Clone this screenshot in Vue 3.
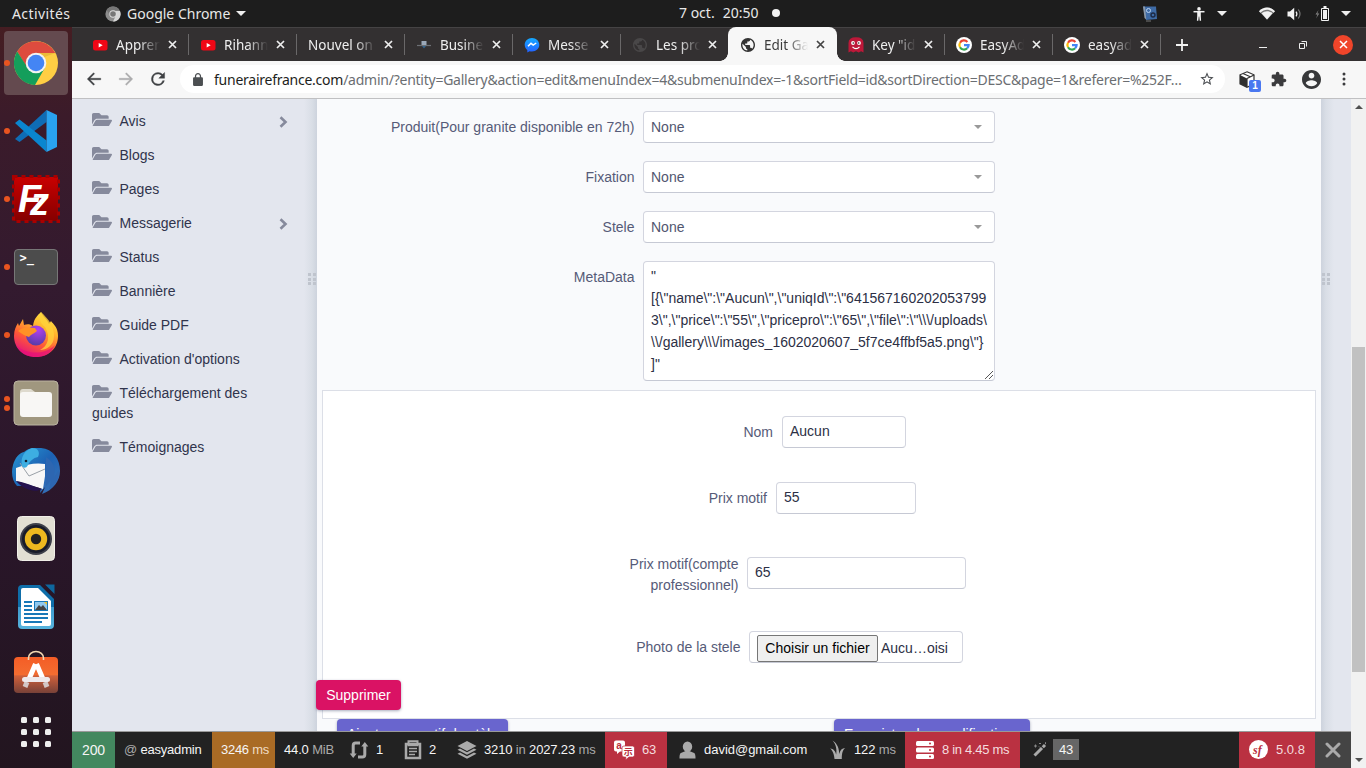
<script setup>
const tabs = [
  { icon: 'youtube', title: 'Appren', sep: true },
  { icon: 'youtube', title: 'Rihann', sep: true },
  { icon: '', title: 'Nouvel on', sep: true },
  { icon: 'business', title: 'Busine', sep: true },
  { icon: 'messenger', title: 'Messe', sep: true },
  { icon: 'globe', title: 'Les pro' },
  { icon: 'globe', title: 'Edit Ga', active: true },
  { icon: 'ghost', title: 'Key "id', sep: true },
  { icon: 'google', title: 'EasyAd', sep: true },
  { icon: 'google', title: 'easyad', sep: true },
]

const menu = [
  { label: 'Avis', sub: true },
  { label: 'Blogs' },
  { label: 'Pages' },
  { label: 'Messagerie', sub: true },
  { label: 'Status' },
  { label: 'Bannière' },
  { label: 'Guide PDF' },
  { label: "Activation d'options" },
  { label: 'Téléchargement des guides' },
  { label: 'Témoignages' },
]

const selects = ['Produit(Pour granite disponible en 72h)', 'Fixation', 'Stele']

const metadata = [
  '"',
  '[{\\"name\\":\\"Aucun\\",\\"uniqId\\":\\"641567160202053799',
  '3\\",\\"price\\":\\"55\\",\\"pricepro\\":\\"65\\",\\"file\\":\\"\\\\\\/uploads\\',
  '\\\\/gallery\\\\\\/images_1602020607_5f7ce4ffbf5a5.png\\"}',
  ']"',
].join('\n')

const globePath =
  'M12 2C6.48 2 2 6.48 2 12s4.48 10 10 10 10-4.48 10-10S17.52 2 12 2zm-1 17.93c-3.95-.49-7-3.85-7-7.93 0-.62.08-1.21.21-1.79L9 15v1c0 1.1.9 2 2 2v1.93zm6.9-2.54c-.26-.81-1-1.39-1.9-1.39h-1v-3c0-.55-.45-1-1-1H8v-2h2c.55 0 1-.45 1-1V7h2c1.1 0 2-.9 2-2v-.41c2.93 1.19 5 4.06 5 7.41 0 2.08-.8 3.97-2.1 5.39z'
</script>

<template>
  <div class="screen">
    <header class="topbar">
      <span class="activities">Activités</span>
      <svg class="mini-chrome" width="16" height="16" viewBox="0 0 16 16">
        <circle cx="8" cy="8" r="7.6" fill="#8d8d8d" />
        <path d="M8 .4A7.6 7.6 0 0 0 1.5 4L5 9.5 8 4.6h6.8A7.6 7.6 0 0 0 8 .4z" fill="#777" />
        <path d="M15 5a7.6 7.6 0 0 1-7 10.6L11 9.6V5z" fill="#d6d6d6" />
        <circle cx="8" cy="8" r="3.7" fill="#ddd" />
        <circle cx="8" cy="8" r="2.8" fill="#777" />
      </svg>
      <span class="appname">Google Chrome</span>
      <i class="caret caret-app"></i>
      <span class="clock"><span>7 oct.</span><span>20:50</span><i></i></span>
      <div class="tray">
        <svg width="16" height="16" viewBox="0 0 16 16">
          <path d="M1 .5h13l1 12.500-11 1z" fill="#3e6ba6" />
          <path d="M1 .5h2l1.300 13L2.500 12z" fill="#8a98a8" />
          <circle cx="6.500" cy="4.500" r="2" fill="none" stroke="#bcd3ef" />
          <circle cx="11" cy="9" r="2" fill="none" stroke="#1d2b45" stroke-width="1.400" />
          <path d="M4 15h5" stroke="#777" />
        </svg>
        <svg class="t-access" width="12" height="14" viewBox="0 0 12 14">
          <circle cx="6" cy="1.900" r="1.800" fill="#f2f2f2" />
          <path d="M.5 4.700h11" stroke="#f2f2f2" stroke-width="1.500" />
          <path d="M4.200 4.500h3.600V9l.3 4.800H6.700L6.200 9.500h-.4L5.300 13.800H3.900L4.200 9z" fill="#f2f2f2" />
        </svg>
        <i class="caret t-c1"></i>
        <svg class="t-wifi" width="16" height="13" viewBox="0 0 16 13">
          <path d="M0 4.300C4.500-.7 11.500-.7 16 4.300L8 12.800z" fill="#777" />
          <path d="M0 4.300C4.500-.7 11.500-.7 16 4.300L14.600 5.700C10.500 1.700 5.500 1.700 1.400 5.700z" fill="#f2f2f2" />
          <path d="M2.500 6.300c3.300-2.700 7.700-2.700 11 0L8 12.500z" fill="#f2f2f2" />
        </svg>
        <svg class="t-vol" width="15" height="14" viewBox="0 0 15 14">
          <path d="M.5 4.500H3L7.200.8v12.400L3 9.500H.5z" fill="#f2f2f2" />
          <path d="M9 4.700q1.800 2.300 0 4.600" fill="none" stroke="#f2f2f2" stroke-width="1.200" />
          <path d="M11.300 2.500q3.400 4.500 0 9" fill="none" stroke="#777" stroke-width="1.200" />
        </svg>
        <svg class="t-bat" width="15" height="16" viewBox="0 0 15 16">
          <path d="M3.500 4L.5 8.500h2L1 12.500 4.300 7.500h-2z" fill="#888" />
          <path d="M6.500 2.500h7v12h-7z" fill="none" stroke="#f2f2f2" />
          <path d="M8 4h4v9H8zM8.500 0h3v2h-3z" fill="#f2f2f2" />
        </svg>
        <i class="caret t-c2"></i>
      </div>
    </header>

    <div class="body">
      <nav class="dock">
        <div class="slot on">
          <i class="run"></i>
          <svg width="46" height="46" viewBox="0 0 46 46">
            <circle cx="23" cy="23" r="22" fill="#ffce44" />
            <path d="M4.200 11.500A22 22 0 0 1 42.300 13H23L14 28z" fill="#dd4b3e" />
            <path d="M4.200 11.500A22 22 0 0 0 22 45L31.500 28.500H15z" fill="#149e5b" />
            <path d="M23 13h19.300l-11 4z" fill="#d9a72a" opacity=".5" />
            <circle cx="23" cy="23" r="10.300" fill="#f3f3f3" />
            <circle cx="23" cy="23" r="8.300" fill="#4485f4" />
          </svg>
        </div>
        <div class="slot">
          <i class="run"></i>
          <svg width="44" height="44" viewBox="0 0 44 44">
            <path d="M1 30L32.500 1v12L5.500 33z" fill="#0f6cb5" />
            <path d="M1 14l4.500-3.500 27 21V43z" fill="#0a86cf" />
            <path d="M32.500 1L43 6v32l-10.500 5z" fill="#29a3f0" />
          </svg>
        </div>
        <div class="slot">
          <i class="run"></i>
          <svg width="48" height="48" viewBox="0 0 48 48">
            <defs><linearGradient id="fz" x1="0" y1="0" x2="0" y2="1"><stop offset="0" stop-color="#c90000" /><stop offset="1" stop-color="#850000" /></linearGradient></defs>
            <rect x="2" y="2" width="44" height="44" fill="url(#fz)" />
            <rect x="1.500" y="1.500" width="45" height="45" fill="none" stroke="#a90000" stroke-width="3" stroke-dasharray="4 4" />
            <text class="fz"><tspan x="6" y="37">F</tspan><tspan x="18" y="40">z</tspan></text>
          </svg>
        </div>
        <div class="slot">
          <i class="run"></i>
          <svg width="44" height="36" viewBox="0 0 44 36">
            <rect x=".5" y=".5" width="43" height="35" rx="3.500" fill="#4c4c4c" stroke="#777" />
            <text x="5.500" y="13" class="prompt">&gt;_</text>
          </svg>
        </div>
        <div class="slot">
          <i class="run"></i>
          <svg width="46" height="48" viewBox="0 0 46 48">
            <defs>
              <linearGradient id="ff" x1=".8" y1="0" x2=".3" y2="1"><stop offset="0" stop-color="#fff04a" /><stop offset=".35" stop-color="#ffb32c" /><stop offset=".65" stop-color="#ff5a36" /><stop offset="1" stop-color="#e3127c" /></linearGradient>
              <radialGradient id="fp" cx=".6" cy=".2" r=".9"><stop offset="0" stop-color="#b33ff0" /><stop offset="1" stop-color="#4d3b9f" /></radialGradient>
            </defs>
            <path d="M23 46C10 46 1 37 1 25c0-6 2-10 4-13l1 3 4-7 1 6c3-1 6-1 9 1 1-8 5-11 8-14 2 5 6 7 8 12l2-3c2 3 7 6 7 15 0 12-9 21-22 21z" fill="url(#ff)" />
            <circle cx="23" cy="24.500" r="10" fill="url(#fp)" />
            <path d="M5 20c4-4 10-4 17-3l2 3c-3 3-6 3-8 6-4-1-7-3-11-6z" fill="#ff9125" />
            <path d="M28 1c7 7 13 13 13 24 0 10-8 14-14 14 8-4 11-13 5-23-6-5-6-10-4-15z" fill="#ffd13b" opacity=".8" />
            <path d="M3 34c7 8 27 12 39 0-4 9-11 12-19 12S7 43 3 34z" fill="#e5107b" opacity=".7" />
          </svg>
        </div>
        <div class="slot">
          <i class="run two"></i>
          <svg width="46" height="46" viewBox="0 0 46 46">
            <rect x="1" y="1" width="44" height="44" rx="4" fill="#a0977f" stroke="#bbb4a2" />
            <path d="M7 12q0-3 3-3h8l4 3v6H7z" fill="#dedace" />
            <rect x="7" y="12" width="32" height="25" rx="3" fill="#f8f7f5" />
          </svg>
        </div>
        <div class="slot">
          <svg width="48" height="48" viewBox="0 0 48 48">
            <defs><linearGradient id="tb" x1="0" y1="0" x2="1" y2="1"><stop offset="0" stop-color="#279bd5" /><stop offset=".5" stop-color="#1d62b4" /><stop offset="1" stop-color="#3d74b8" /></linearGradient></defs>
            <path d="M12 5c5-5 12-4 17-4 12 1 19 11 19 23 0 10-7 19-18 23l3-7-5 6 1-7H5C0 34-1 25 1 18 3 11 7 6 12 5z" fill="url(#tb)" />
            <path d="M4 21q16-6 29-4v12l-2 13L4 34z" fill="#f7f7f7" />
            <path d="M8 16l9 13 16-7" fill="none" stroke="#9aa1a8" />
            <path d="M4 34c8 1 17 5 26 8-7 4-18 1-26-8z" fill="#25124f" />
            <path d="M10 19C8 10 13 3 20 1c7 0 8 5 6 9-5 1-8 4-10 8-2 4-5 3-6 1z" fill="#3daee2" />
            <path d="M34 10c8 5 10 12 8 20l5-7c0 12-5 16-10 20l2-10-5 6z" fill="#2d66b1" />
            <circle cx="14" cy="14" r="1.300" fill="#123" />
          </svg>
        </div>
        <div class="slot">
          <svg width="38" height="46" viewBox="0 0 38 46">
            <rect x=".5" y=".5" width="37" height="44" rx="4" fill="#e2dfd3" stroke="#f1efe8" />
            <circle cx="19" cy="23" r="16" fill="#3d3f49" />
            <circle cx="19" cy="23" r="14" fill="#191c2a" />
            <circle cx="19" cy="23" r="11.200" fill="#edb91f" />
            <circle cx="19" cy="23" r="5.200" fill="#222" />
          </svg>
        </div>
        <div class="slot">
          <svg width="38" height="46" viewBox="0 0 38 46">
            <defs><linearGradient id="lw" x1="0" y1="0" x2="0" y2="1"><stop offset=".49" stop-color="#0f6ea9" /><stop offset=".5" stop-color="#3f9bce" /><stop offset="1" stop-color="#56b3dd" /></linearGradient></defs>
            <path d="M5 1h18l14 14v26q0 4-4 4H5q-4 0-4-4V5q0-4 4-4z" fill="url(#lw)" />
            <path d="M6 4h15l13 13v23q0 2-2 2H6q-2 0-2-2V6q0-2 2-2z" fill="#fff" />
            <path d="M28 .5h9.500V10z" fill="#0e679e" />
            <path d="M7 18h8M7 22h8M7 26h8M7 30h24M7 34h24M7 38h18" stroke="#1878b8" stroke-width="2" />
            <rect x="17.500" y="17.500" width="13" height="9" fill="#91c9ef" stroke="#1878b8" />
            <path d="M18 26l4-5 2 2 2-2 4 5z" fill="#454545" />
            <path d="M27 18h3v3z" fill="#f0c32c" />
          </svg>
        </div>
        <div class="slot">
          <svg class="soft" width="46" height="44" viewBox="0 0 46 44">
            <defs><linearGradient id="sw" x1="0" y1="0" x2="0" y2="1"><stop offset="0" stop-color="#f45d26" /><stop offset=".5" stop-color="#f36d31" /><stop offset=".52" stop-color="#d0603a" /><stop offset="1" stop-color="#774138" /></linearGradient></defs>
            <rect x="1" y="7" width="44" height="36" rx="4" fill="url(#sw)" />
            <path d="M15.500 10V8a7.500 6.500 0 0 1 15 0v2" fill="none" stroke="#f2d8b2" stroke-width="1.600" />
            <path d="M22.500 14l-6.500 15M23.500 14l6.500 15" stroke="#fff" stroke-width="5" />
            <path d="M14 32l-2 5M32 32l2 5" stroke="#d4c8c7" stroke-width="5" />
            <rect x="9" y="27" width="28" height="5" rx="2.500" fill="#eee9eb" />
          </svg>
        </div>
        <div class="apps"><i v-for="n in 9" :key="n"></i></div>
      </nav>

      <div class="browser">
        <div class="tabstrip">
          <div v-for="(t, i) in tabs" :key="i" class="tab" :class="{ active: t.active, sep: t.sep }">
            <svg v-if="t.icon === 'youtube'" class="fav" viewBox="0 0 16 16">
              <rect x="1" y="3" width="14.500" height="10.500" rx="2.500" fill="#f00716" />
              <path d="M6.700 6v4.500l4-2.200z" fill="#fff" />
            </svg>
            <svg v-else-if="t.icon === 'business'" class="fav" viewBox="0 0 16 16">
              <path d="M1 8.500h14" stroke="#6d7075" stroke-width="1.200" />
              <path d="M5.500 4h5v4h-5z" fill="#9ba8b8" />
              <path d="M6 9h4l-2 2.500z" fill="#33658f" />
            </svg>
            <svg v-else-if="t.icon === 'messenger'" class="fav" viewBox="0 0 16 16">
              <defs><linearGradient id="ms" x1="0" y1="0" x2="0" y2="1"><stop offset="0" stop-color="#15aaff" /><stop offset="1" stop-color="#2360ff" /></linearGradient></defs>
              <path d="M8 1C3.800 1 .7 4 .7 7.800c0 2.200 1 4 2.600 5.200v2.400l2.300-1.200c.7.200 1.500.3 2.400.3 4.200 0 7.300-2.900 7.300-6.700S12.200 1 8 1z" fill="url(#ms)" />
              <path d="M4 9.300l3-3 2.200 1.800L12.200 6" fill="none" stroke="#fff" stroke-width="1.500" />
            </svg>
            <svg v-else-if="t.icon === 'globe'" class="fav globe" viewBox="2 2 20 20"><path :d="globePath" /></svg>
            <svg v-else-if="t.icon === 'ghost'" class="fav" viewBox="0 0 16 16">
              <path d="M.5 15.500V6Q.5.300 8 .3T15.500 6v9.500l-2.400-1.200-2.400 1.200L8 14.300l-2.700 1.200-2.400-1.200z" fill="#bd1839" />
              <circle cx="5" cy="6" r="1.900" fill="#fff" /><circle cx="11" cy="6" r="1.900" fill="#fff" />
              <circle cx="5.300" cy="6" r=".8" fill="#222" /><circle cx="10.700" cy="6" r=".8" fill="#222" />
              <path d="M4.500 9.800q3.500 3.600 7 0" fill="none" stroke="#fff" stroke-width="1.200" />
            </svg>
            <svg v-else-if="t.icon === 'google'" class="fav" viewBox="0 0 16 16">
              <circle cx="8" cy="8" r="8" fill="#fff" />
              <g fill="none" stroke-width="2.200">
                <path d="M11.400 4.900A4.600 4.600 0 0 0 4 5.700" stroke="#ea4335" />
                <path d="M4 5.700a4.600 4.600 0 0 0 0 4.600" stroke="#fbbc05" />
                <path d="M4 10.300a4.600 4.600 0 0 0 7.200.9" stroke="#34a853" />
                <path d="M11.200 11.200A4.600 4.600 0 0 0 12.600 8.100H8" stroke="#4285f4" />
              </g>
            </svg>
            <span class="title">{{ t.title }}</span>
            <svg class="x" width="9" height="9" viewBox="0 0 9 9"><path d="M1 1l7 7M8 1L1 8" /></svg>
          </div>
          <svg class="plus" width="12" height="12" viewBox="0 0 12 12"><path d="M6 0v12M0 6h12" stroke="#f2f2f2" stroke-width="1.800" /></svg>
          <div class="winbtns">
            <i class="min"></i>
            <svg width="8" height="8" viewBox="0 0 8 8"><path d="M.5 2.500h5v5h-5zM2.500.5h5v5" fill="none" stroke="#eee" /></svg>
            <b><svg width="9" height="9" viewBox="0 0 9 9"><path d="M1 1l7 7M8 1L1 8" stroke="#fff" stroke-width="1.500" /></svg></b>
          </div>
        </div>

        <div class="toolbar">
          <svg class="nav" viewBox="0 0 24 24"><path d="M21 11H6.800l6-6L11.400 3.600 3 12l8.400 8.400 1.400-1.400-6-6H21z" fill="#3e4043" stroke="#3e4043" stroke-width=".5" /></svg>
          <svg class="nav" viewBox="0 0 24 24"><path d="M3 11h14.200l-6-6 1.400-1.400L21 12l-8.400 8.400-1.400-1.400 6-6H3z" fill="#ababad" stroke="#ababad" stroke-width=".5" /></svg>
          <svg class="nav" viewBox="0 0 24 24"><path d="M18.200 5.800A8.700 8.700 0 0 0 12 3.200a8.800 8.800 0 1 0 8.500 11h-2.300A6.600 6.600 0 1 1 12 5.400c1.800 0 3.500.8 4.600 2L13 11h7.800V3.200z" fill="#3e4043" stroke="#3e4043" stroke-width=".5" /></svg>
          <div class="omnibox">
            <svg class="lock" width="10" height="13" viewBox="4 1 16 21"><path d="M18 8h-1V6c0-2.760-2.240-5-5-5S7 3.240 7 6v2H6c-1.100 0-2 .9-2 2v10c0 1.100.9 2 2 2h12c1.100 0 2-.9 2-2V10c0-1.100-.9-2-2-2zM9 6a3 3 0 0 1 6 0v2H9z" fill="#4c4f52" /></svg>
            <span class="url"><b>funerairefrance.com</b>/admin/?entity=Gallery&amp;action=edit&amp;menuIndex=4&amp;submenuIndex=-1&amp;sortField=id&amp;sortDirection=DESC&amp;page=1&amp;referer=%252F…</span>
            <svg class="star" width="16" height="16" viewBox="0 0 24 24"><path d="M22 9.240l-7.190-.62L12 2 9.190 8.630 2 9.240l5.460 4.730L5.820 21 12 17.270 18.180 21l-1.630-7.030L22 9.240zM12 15.400l-3.760 2.270 1-4.280-3.320-2.880 4.380-.38L12 6.100l1.710 4.040 4.380.38-3.320 2.880 1 4.280L12 15.400z" fill="#4a4d51" /></svg>
          </div>
          <div class="cube">
            <svg width="16" height="17" viewBox="0 0 16 17">
              <path d="M8 .8l7 3v9l-7 3.500-7-3.500v-9z" fill="#fff" stroke="#333" stroke-width="1.200" />
              <path d="M1 4l7 3.500v8.800l-7-3.500z" fill="#2f2f2f" />
              <path d="M8 7.500L15 4M8 7.500V16M4 2.500l7.300 3.300" stroke="#333" stroke-width="1.200" />
            </svg>
            <b>1</b>
          </div>
          <svg class="puzzle" viewBox="1 0 23 23"><path d="M20.500 11H19V7c0-1.100-.9-2-2-2h-4V3.500C13 2.120 11.880 1 10.500 1S8 2.120 8 3.500V5H4c-1.100 0-1.990.9-1.990 2v3.800H3.500c1.490 0 2.700 1.210 2.700 2.700s-1.210 2.700-2.700 2.700H2V20c0 1.100.9 2 2 2h3.800v-1.500c0-1.490 1.210-2.700 2.700-2.700s2.700 1.210 2.700 2.700V22H17c1.100 0 2-.9 2-2v-4h1.500c1.380 0 2.500-1.120 2.500-2.500S21.880 11 20.500 11z" fill="#3b3b3d" /></svg>
          <svg class="account" viewBox="2 2 20 20"><path d="M12 2C6.480 2 2 6.480 2 12s4.480 10 10 10 10-4.480 10-10S17.520 2 12 2zm0 3c1.660 0 3 1.340 3 3s-1.340 3-3 3-3-1.340-3-3 1.340-3 3-3zm0 14.200c-2.500 0-4.710-1.280-6-3.220.03-1.990 4-3.080 6-3.080 1.990 0 5.970 1.090 6 3.080-1.290 1.940-3.500 3.220-6 3.220z" fill="#37383a" /></svg>
          <svg class="dots" width="4" height="14" viewBox="0 0 4 14"><circle cx="2" cy="2" r="1.500" /><circle cx="2" cy="7" r="1.500" /><circle cx="2" cy="12" r="1.500" /></svg>
        </div>

        <div class="viewport">
          <div class="page">
            <div class="columns">
              <aside class="sidebar">
                <a v-for="m in menu" :key="m.label">
                  <svg class="folder" viewBox="0 64 576 384"><path d="M572.694 292.093L500.270 416.248A63.997 63.997 0 0 1 444.989 448H45.025c-18.523 0-30.064-20.093-20.731-36.093l72.424-124.155A64 64 0 0 1 152 256h399.964c18.523 0 30.064 20.093 20.730 36.093zM152 224h328v-48c0-26.510-21.490-48-48-48H272l-64-64H48C21.490 64 0 85.490 0 112v278.046l69.077-118.418C86.214 242.250 117.989 224 152 224z" /></svg>{{ m.label }}
                  <svg v-if="m.sub" class="chev" width="9" height="12" viewBox="0 0 9 12"><path d="M1.500 1.300L6.500 6l-5 4.700" /></svg>
                </a>
                <span class="grip"><i v-for="n in 6" :key="n"></i></span>
              </aside>

              <main class="content">
                <div v-for="s in selects" :key="s" class="row">
                  <label>{{ s }}</label>
                  <div class="control select">None<i></i></div>
                </div>
                <div class="row area">
                  <label>MetaData</label>
                  <div class="control textarea">{{ metadata }}<svg width="8" height="8" viewBox="0 0 8 8"><path d="M0 8L8 0M4 8l4-4" /></svg></div>
                </div>

                <section class="panel">
                  <div class="prow r1"><label>Nom</label><div class="control">Aucun</div></div>
                  <div class="prow r2"><label>Prix motif</label><div class="control">55</div></div>
                  <div class="prow r3"><label>Prix motif(compte<br>professionnel)</label><div class="control">65</div></div>
                  <div class="prow r4"><label>Photo de la stele</label><div class="control file"><span class="choose">Choisir un fichier</span>Aucu…oisi</div></div>
                  <span class="btn danger">Supprimer</span>
                </section>
                <div class="actions">
                  <span class="btn primary add">Ajouter un motif de stèle</span>
                  <span class="btn primary save">Enregistrer les modifications</span>
                </div>
              </main>

              <div class="gutter"><span class="grip"><i v-for="n in 6" :key="n"></i></span></div>
            </div>

            <footer class="wdt">
              <div class="b status">200</div>
              <div class="b route"><em>@</em> easyadmin</div>
              <div class="b time">3246 <em>ms</em></div>
              <div class="b mem">44.0 <em>MiB</em></div>
              <div class="b ajax">
                <svg width="20" height="20" viewBox="0 0 20 20"><path d="M4.200 14V5.500q0-2.500 2.500-2.500H11M15.800 6v8.500q0 2.500-2.500 2.500H9" fill="none" stroke="#aaa" stroke-width="3" /><path d="M.7 13.500h7L4.200 18zM12.300 6.500h7L15.800 2z" fill="#aaa" /></svg>1
              </div>
              <div class="b form">
                <svg width="18" height="20" viewBox="0 0 18 20"><path d="M2 4h14v14H2z" fill="none" stroke="#aaa" stroke-width="2.500" /><path d="M4.500 1.300h9v4h-9z" fill="none" stroke="#aaa" stroke-width="2" /><path d="M5 8.500h8M5 11.500h8M5 14.500h6" stroke="#aaa" stroke-width="1.600" /></svg>2
              </div>
              <div class="b cache">
                <svg width="20" height="20" viewBox="0 0 20 20"><path d="M10 1l9.500 5L10 11 .5 6zM.5 9.800L3 8.500l7 3.700 7-3.700 2.500 1.300L10 14.800zM.5 13.800L3 12.500l7 3.700 7-3.700 2.500 1.300L10 18.800z" fill="#aaa" /></svg>3210 <em>in</em> 2027.23 <em>ms</em>
              </div>
              <div class="b red trans">
                <svg width="21" height="20" viewBox="0 0 21 20">
                  <path d="M2 .5h7q2 0 2 2v7q0 2-2 2H6L3 14v-2.500H2q-2 0-2-2v-7q0-2 2-2z" fill="#fff" />
                  <path d="M10 6h8.500q2 0 2 2v7q0 2-2 2H15l-3.200 2.800V17H10q-2 0-2-2V8q0-2 2-2z" fill="#fff" stroke="#ba3040" stroke-width=".7" />
                  <text x="2.200" y="8.500" class="tr-a">a</text><text x="9.700" y="15" class="tr-b">示</text>
                </svg>63
              </div>
              <div class="b user">
                <svg width="17" height="18" viewBox="0 0 18 18"><ellipse cx="9" cy="5.500" rx="5" ry="5.500" fill="#aaa" /><path d="M7 10h4l5 2.300q1.500.8 1.500 5.700H.5q0-4.900 1.500-5.700z" fill="#aaa" /></svg>david@gmail.com
              </div>
              <div class="b twig">
                <svg width="16" height="20" viewBox="0 0 16 20"><path d="M4.500 19c-.3-4-1.500-8.500-4.500-10.500 3.500 0 5.500 3 6.200 6C7 9 6 4.500 2.500.5 7.500 3.500 9 8.500 9.300 14c.7-4 2.700-6 6-6-2.800 1.700-3.500 6-3.500 11z" fill="#aaa" /></svg>122 <em>ms</em>
              </div>
              <div class="b red db">
                <svg width="18" height="18" viewBox="0 0 18 18"><rect width="18" height="5" x="0" y="0" rx="1.500" fill="#fff" /><rect width="18" height="5" x="0" y="6.500" rx="1.500" fill="#fff" /><rect width="18" height="5" x="0" y="13" rx="1.500" fill="#fff" /><g fill="#ba3040"><circle cx="14" cy="2.500" r="1" /><circle cx="14" cy="9" r="1" /><circle cx="14" cy="15.500" r="1" /></g></svg>8 <em>in</em> 4.45 <em>ms</em>
              </div>
              <div class="b deco">
                <svg width="14" height="15" viewBox="0 0 14 15"><path d="M1.500 13.500L9 6" stroke="#aaa" stroke-width="3" /><path d="M9.800 5.200L12 3" stroke="#aaa" stroke-width="3" /><path d="M1 4h3M2.500 2.500v3M6 1.500h2M12.500.2v2M6 4.500l1 1" stroke="#888" /></svg><span>43</span>
              </div>
              <div class="fill"></div>
              <div class="b red sf">
                <svg width="19" height="19" viewBox="0 0 19 19"><circle cx="9.500" cy="9.500" r="9.500" fill="#fff" /><text x="4" y="13.500" class="sf-t">sf</text></svg>5.0.8
              </div>
              <div class="b close"><svg width="16" height="16" viewBox="0 0 16 16"><path d="M2 2l12 12M14 2L2 14" stroke="#aaa" stroke-width="3" stroke-linecap="round" /></svg></div>
            </footer>
          </div>

          <div class="scroll">
            <i class="up"></i>
            <div class="track"><div class="thumb"></div></div>
            <i class="down"></i>
          </div>
        </div>
      </div>
    </div>
  </div>
</template>

<style>
body { margin: 0; overflow: hidden; }
</style>

<style scoped>
* { box-sizing: border-box; }
svg { display: block; flex: none; }
.screen { width: 1366px; height: 768px; display: flex; flex-direction: column; overflow: hidden; font-family: "Liberation Sans", Arial, sans-serif; font-size: 14px; }

.topbar { height: 27px; flex: none; background: #1d1d1d; color: #e8e8e8; display: flex; align-items: center; position: relative; font-family: "Noto Sans", sans-serif; font-size: 14px; white-space: nowrap; }
.activities { width: 58px; margin-left: 12px; letter-spacing: .4px; }
.mini-chrome { margin-left: 35px; }
.appname { width: 104px; margin-left: 6px; }
.caret { border: 5px solid transparent; border-top-color: #eee; border-bottom: 0; }
.caret-app { margin-left: 5px; }
.clock { position: absolute; left: 679px; top: 3px; display: flex; align-items: center; gap: 8px; }
.clock i { width: 8px; height: 8px; border-radius: 50%; background: #f2f2f2; margin-left: 6px; }
.tray { display: flex; align-items: center; margin-left: auto; padding-right: 15px; }
.t-access { margin-left: 35px; }
.t-c1 { margin-left: 12px; }
.t-wifi { margin-left: 32px; }
.t-vol { margin-left: 12px; }
.t-bat { margin-left: 13px; }
.t-c2 { margin-left: 11px; }

.body { flex: 1; display: flex; min-height: 0; }
.dock { width: 72px; flex: none; background: linear-gradient(#451d22, #3b1b2a 12%, #331a2f 35%, #2a162a 65%, #22151f); padding-top: 2px; display: flex; flex-direction: column; }
.slot { height: 68px; flex: none; display: flex; align-items: center; justify-content: center; position: relative; }
.slot.on { height: 64px; margin: 2px 4px; border-radius: 4px; background: #644a4f; }
.run { position: absolute; left: 4px; width: 6px; height: 6px; border-radius: 50%; background: #e95420; }
.on .run { left: 0; }
.run.two { transform: translateY(-4px); box-shadow: 0 9px #e95420; }
.soft { margin-top: -6px; }
.fz { font: italic bold 38px "Liberation Sans", sans-serif; fill: #fff; }
.prompt { font: bold 12px "DejaVu Sans Mono", monospace; fill: #fff; }
.apps { display: grid; grid-template-columns: repeat(3, 6px); gap: 6px; justify-content: center; margin-top: 8px; }
.apps i { height: 6px; border-radius: 1.500px; background: #eee; }

.browser { flex: 1; min-width: 0; display: flex; flex-direction: column; }
.tabstrip { height: 34px; flex: none; background: #333031; border-top: 1px solid #454344; display: flex; align-items: center; padding-left: 8px; font-family: "Noto Sans", sans-serif; font-size: 13.500px; color: #eee; position: relative; }
.tab { width: 108px; height: 33px; flex: none; padding-left: 12px; display: flex; align-items: center; position: relative; }
.tab.sep::after { content: ""; position: absolute; right: -1px; top: 6px; width: 1px; height: 21px; background: #6a6869; }
.tab.active { background: #f7f7f7; color: #3b3b3b; border-radius: 8px 8px 0 0; height: 34px; margin-top: -1px; padding-top: 1px; width: 109px; margin-right: -1px; padding-right: 1px; }
.tab.active::before, .tab.active::after { content: ""; position: absolute; bottom: 0; width: 8px; height: 8px; }
.tab.active::before { left: -8px; background: radial-gradient(circle at 0 0, transparent 7.500px, #f7f7f7 8px); }
.tab.active::after { right: -8px; background: radial-gradient(circle at 100% 0, transparent 7.500px, #f7f7f7 8px); }
.fav { width: 16px; height: 16px; margin-right: 8px; }
.globe { width: 14px; height: 14px; margin: 0 9px 0 1px; fill: #494748; }
.active .globe { fill: #333; }
.title { flex: 1; overflow: hidden; white-space: nowrap; -webkit-mask-image: linear-gradient(90deg, #000 calc(100% - 21px), transparent); mask-image: linear-gradient(90deg, #000 calc(100% - 21px), transparent); }
.x { margin: 0 11px 0 8px; fill: none; stroke: #eee; stroke-width: 1.700; }
.active .x { stroke: #444; }
.plus { margin-left: 16px; }
.winbtns { margin-left: auto; display: flex; align-items: center; padding-right: 13px; }
.min { width: 8px; height: 1px; background: #eee; margin: 6px 32px 0 0; }
.winbtns b { width: 20px; height: 20px; margin-left: 26px; border-radius: 50%; background: #f0452a; display: flex; align-items: center; justify-content: center; }

.toolbar { height: 38px; flex: none; background: #f7f7f7; border-bottom: 1px solid #c0c0c2; display: flex; align-items: center; padding: 0 20px 1px 13px; }
.nav { width: 18px; height: 18px; margin-right: 14px; }
.omnibox { width: 1046px; height: 28px; border-radius: 14px; background: #fff; display: flex; align-items: center; padding: 0 10px 0 13px; margin-left: -1px; }
.url { width: 978px; margin-left: 11px; font: 14px "Noto Sans", sans-serif; letter-spacing: -.248px; color: #6b6e72; white-space: nowrap; }
.url b { font-weight: 400; color: #1d1e20; }
.star { margin-left: auto; }
.cube { position: relative; margin-left: 14px; }
.cube b { position: absolute; left: 10px; top: 9px; width: 12px; height: 12px; border-radius: 2px; background: #4a78f0; color: #fff; font-size: 10px; line-height: 12px; text-align: center; }
.puzzle { width: 16px; height: 16px; margin-left: 16px; }
.account { width: 19px; height: 19px; margin-left: 15px; }
.dots { margin-left: 21px; fill: #3b3b3d; }

.viewport { flex: 1; min-height: 0; display: flex; }
.page { flex: 1; min-width: 0; display: flex; flex-direction: column; }
.columns { flex: 1; min-height: 0; display: flex; background: #e3e6ee; }
.sidebar { width: 245px; flex: none; padding: 12px 20px 0; color: #30344c; line-height: 20px; position: relative; background: linear-gradient(90deg, transparent 232px, #d9dee6 240px, #cdd3dd 245px); }
.sidebar a { display: block; margin-bottom: 14px; padding-right: 30px; position: relative; white-space: normal; }
.sidebar .folder { display: inline-block; width: 20px; height: 13.500px; margin-right: 7.500px; fill: #868a9c; vertical-align: 0; }
.chev { position: absolute; left: 186.500px; top: 5px; fill: none; stroke: #868a9c; stroke-width: 2.600; }
.grip { position: absolute; left: 236px; top: 174px; display: grid; grid-template-columns: 3px 3px; gap: 1.500px; }
.grip i { width: 3px; height: 3px; background: #bfc4cd; }
.gutter { width: 30px; flex: none; position: relative; background: linear-gradient(90deg, #cdd3dd, #d9dee6 5px, transparent 13px); }
.gutter .grip { left: 1px; }

.content { width: 1004px; flex: none; background: #f9fafc; padding: 12px 5px 0; position: relative; overflow: visible; }
.row { display: flex; align-items: flex-start; margin-bottom: 18px; }
.row.area { margin-bottom: 9px; }
.row label { width: 312.500px; margin-right: 8.500px; text-align: right; line-height: 32px; }
label { color: #565b78; flex: none; }
.control { border: 1px solid #d3d5df; border-bottom-color: #c6c9d4; border-radius: 4px; background: #fff; height: 32px; line-height: 30px; padding: 0 7px; color: #2c2f45; flex: none; }
.select { width: 352px; color: #51566f; display: flex; align-items: center; justify-content: space-between; padding-right: 12px; }
.select i { border: 4px solid transparent; border-top-color: #999; border-bottom: 0; }
.textarea { width: 352px; height: 120px; line-height: 22px; padding-top: 3px; white-space: pre; position: relative; }
.textarea svg { position: absolute; right: 1px; bottom: 1px; stroke: #444; stroke-width: .9; }

.panel { height: 329px; border: 1px solid #dcdfe7; background: #fff; padding-top: 25px; position: relative; }
.prow { display: flex; align-items: flex-start; }
.prow label { text-align: right; line-height: 32px; margin-right: 9px; }
.prow .control { line-height: 29px; }
.r1 label { width: 450px; } .r1 .control { width: 124px; }
.r2 { margin-top: 34px; } .r2 label { width: 444px; } .r2 .control { width: 140px; }
.r3 { height: 32px; margin-top: 43px; } .r3 label { width: 415.500px; margin-right: 8.500px; line-height: 21px; margin-top: -3px; } .r3 .control { width: 219px; }
.r4 { margin-top: 42px; } .r4 label { width: 417.500px; margin-right: 8.500px; } .r4 .control { width: 214px; }
.prow .file { display: flex; line-height: 32px; white-space: nowrap; }
.choose { height: 27px; margin: 3px 3px 0 0; border: 1px solid #767676; border-radius: 2px; background: #efefef; color: #000; line-height: 25px; width: 121px; text-align: center; flex: none; }
.btn { display: block; height: 30px; line-height: 30px; border-radius: 4px; color: #fff; text-align: center; box-shadow: 0 1px 3px rgba(40, 50, 90, .4); white-space: nowrap; }
.danger { width: 85px; background: #da1264; margin: 17px 0 0 -7px; position: relative; }
.actions { display: flex; height: 12px; overflow: hidden; padding-left: 15px; }
.primary { background: #6965ce; flex: none; }
.add { width: 171px; }
.save { width: 196px; margin-left: 326px; }

.wdt { height: 37px; flex: none; background: #222; border-top: 1px solid #999; display: flex; font-size: 13px; letter-spacing: -.15px; color: #f5f5f5; position: relative; z-index: 2; white-space: pre; }
.b { display: flex; align-items: center; flex: none; padding-bottom: 1px; }
.b em { font-style: normal; color: #aaa; }
.b svg { margin-right: 7px; }
.status { width: 43px; background: #43885f; justify-content: center; font-size: 14px; }
.route { width: 97px; padding-left: 9px; letter-spacing: -.2px; }
.time { width: 63px; background: #a96b25; padding-left: 9px; letter-spacing: -.28px; }
.time em { color: #f0ddc4; }
.mem { width: 74px; padding-left: 9px; }
.ajax { width: 53px; }
.form { width: 55px; padding-left: 2px; }
.cache { width: 148px; }
.red { background: #ba3141; color: #f4dcdf; }
.red em { color: #f4dcdf; }
.trans { width: 62px; padding-left: 9px; }
.user { width: 163px; padding-left: 12px; letter-spacing: -.02px; }
.user svg { margin-right: 8px; }
.twig { width: 75px; }
.twig svg { margin-right: 8px; }
.db { width: 115px; padding-left: 11px; letter-spacing: -.3px; }
.db svg { margin-right: 8px; }
.deco { padding-left: 13px; }
.deco svg { margin-right: 6px; }
.deco span { background: #666; width: 26px; height: 21px; line-height: 21px; text-align: center; }
.fill { flex: 1; }
.sf { width: 76px; padding-left: 10px; letter-spacing: 0; }
.sf svg { margin-right: 8px; }
.close { width: 36px; background: #444; justify-content: center; }
.close svg { margin: 0; }
.tr-a { font: bold 10px "Liberation Sans", sans-serif; fill: #ba3040; }
.tr-b { font: bold 9px "Noto Sans CJK SC", sans-serif; fill: #ba3040; }
.sf-t { font: italic bold 12px "Liberation Serif", serif; fill: #ba3040; }

.scroll { width: 15px; flex: none; background: #f1f1f1; display: flex; flex-direction: column; align-items: center; }
.up, .down { border: 4px solid transparent; flex: none; }
.up { border-top: 0; border-bottom-color: #505050; margin: 6px 0; }
.down { border-bottom: 0; border-top-color: #505050; margin: 6px 0; }
.track { flex: 1; width: 100%; padding: 232px 1px 0; }
.thumb { height: 325px; background: #c1c1c1; }
</style>
